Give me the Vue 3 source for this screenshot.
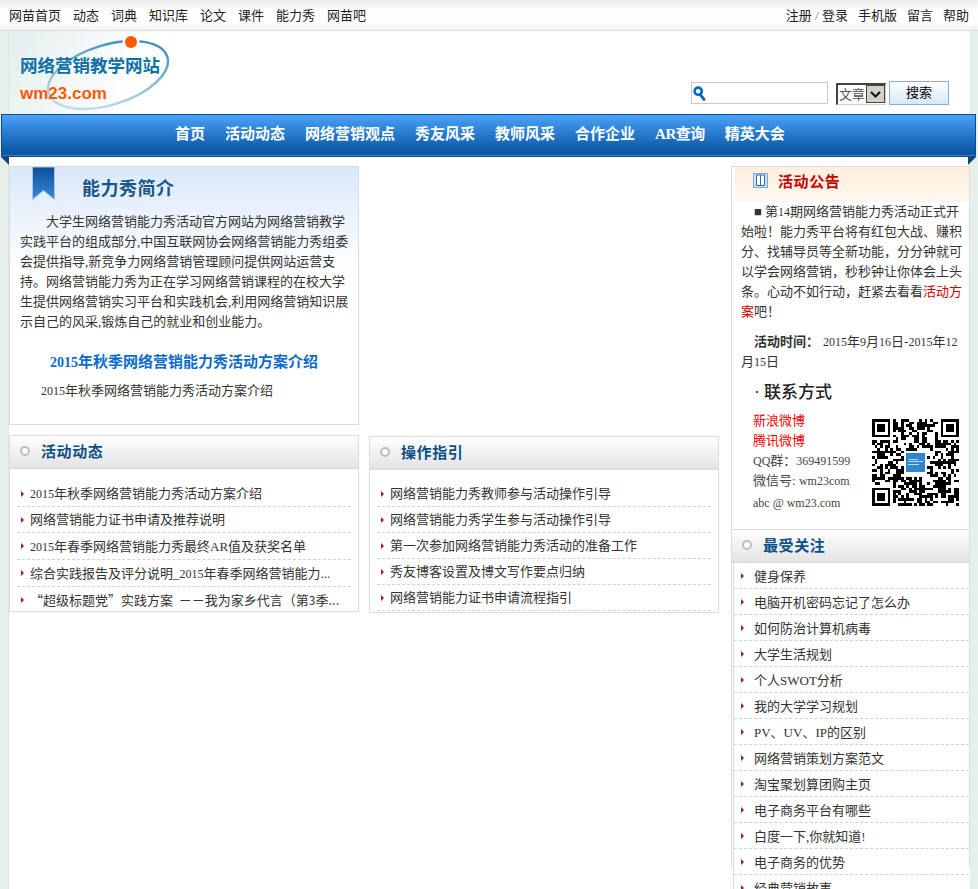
<script setup>
import { computed } from 'vue'

const topLeft = ['网苗首页', '动态', '词典', '知识库', '论文', '课件', '能力秀', '网苗吧']
const topRight = ['手机版', '留言', '帮助']
const navItems = ['首页', '活动动态', '网络营销观点', '秀友风采', '教师风采', '合作企业', 'AR查询', '精英大会']
const newsItems = [
  '2015年秋季网络营销能力秀活动方案介绍',
  '网络营销能力证书申请及推荐说明',
  '2015年春季网络营销能力秀最终AR值及获奖名单',
  '综合实践报告及评分说明_2015年春季网络营销能力...',
  '“超级标题党”实践方案 \u00a0－－我为家乡代言（第3季...'
]
const guideItems = [
  '网络营销能力秀教师参与活动操作引导',
  '网络营销能力秀学生参与活动操作引导',
  '第一次参加网络营销能力秀活动的准备工作',
  '秀友博客设置及博文写作要点归纳',
  '网络营销能力证书申请流程指引'
]
const hotItems = [
  '健身保养', '电脑开机密码忘记了怎么办', '如何防治计算机病毒', '大学生活规划', '个人SWOT分析',
  '我的大学学习规划', 'PV、UV、IP的区别', '网络营销策划方案范文', '淘宝聚划算团购主页',
  '电子商务平台有哪些', '白度一下,你就知道!', '电子商务的优势', '经典营销故事'
]

// Digits in the reference run narrower than the CJK text around them.
const seg = (text) => text.split(/(\d+)/).filter(Boolean).map((t) => ({ t, num: /^\d/.test(t) }))

const N = 33
const qrCells = computed(() => {
  const cells = []
  let seed = 20151
  const rnd = () => {
    seed = (seed * 1103515245 + 12345) & 0x7fffffff
    return (seed >> 16) & 1
  }
  const inFinder = (x, y) => (x < 8 && y < 8) || (x >= N - 8 && y < 8) || (x < 8 && y >= N - 8)
  for (let y = 0; y < N; y++) {
    for (let x = 0; x < N; x++) {
      if (!inFinder(x, y) && rnd()) cells.push({ x, y })
    }
  }
  return cells
})
const finders = [[0, 0], [N - 7, 0], [0, N - 7]]
</script>

<template>
  <div class="page">
    <header class="topbar">
      <nav class="top-links">
        <a v-for="t in topLeft" :key="t">{{ t }}</a>
      </nav>
      <nav class="top-links right">
        <a>注册 <i>/</i> 登录</a>
        <a v-for="t in topRight" :key="t">{{ t }}</a>
      </nav>
    </header>

    <div class="shell">
      <div class="masthead">
        <div class="logo">
          <svg class="logo-art" width="163" height="82" viewBox="0 0 163 82">
            <defs>
              <linearGradient id="ring" x1="0" y1="1" x2="1" y2="0">
                <stop offset="0" stop-color="#dcecf2" />
                <stop offset="0.45" stop-color="#8dbdd4" />
                <stop offset="1" stop-color="#1b7fae" />
              </linearGradient>
            </defs>
            <ellipse cx="99" cy="44" rx="62" ry="30" transform="rotate(-17 99 44)" fill="none" stroke="url(#ring)" stroke-width="2.4" />
            <circle cx="122" cy="11" r="8.5" fill="#fff" />
            <circle cx="122" cy="11" r="6" fill="#f95a05" />
          </svg>
          <div class="logo-title">网络营销教学网站</div>
          <div class="logo-url">wm23.com</div>
        </div>
        <form class="search" @submit.prevent>
          <div class="search-input">
            <svg width="13" height="15" viewBox="0 0 13 15">
              <circle cx="5.2" cy="5.2" r="3.6" fill="none" stroke="#0a63c9" stroke-width="2.6" />
              <path d="M7.2 8.6 L11 13.4" stroke="#0a63c9" stroke-width="3" stroke-linecap="round" />
            </svg>
          </div>
          <div class="fake-select">
            <span>文章</span>
            <b><svg width="13" height="9" viewBox="0 0 13 9"><path d="M2 2 L6.5 6.5 L11 2" fill="none" stroke="#111" stroke-width="2" /></svg></b>
          </div>
          <button class="search-btn" type="button">搜索</button>
        </form>
      </div>

      <nav class="mainnav">
        <a v-for="t in navItems" :key="t">{{ t }}</a>
        <span class="fold left"></span>
        <span class="fold right"></span>
      </nav>

      <div class="content">
        <main class="left-col">
          <section class="intro">
            <svg class="ribbon" width="25" height="34" viewBox="0 0 25 34">
              <defs>
                <linearGradient id="rib" x1="0" y1="0" x2="0" y2="1">
                  <stop offset="0" stop-color="#0e4f9a" />
                  <stop offset="1" stop-color="#3a87d6" />
                </linearGradient>
              </defs>
              <path d="M1.5 0 H23.5 V32.5 L12.5 23.5 L1.5 32.5 Z" fill="url(#rib)" stroke="#a9c6e3" stroke-width="1" />
            </svg>
            <h2 class="intro-title">能力秀简介</h2>
            <p class="intro-text">大学生网络营销能力秀活动官方网站为网络营销教学实践平台的组成部分,中国互联网协会网络营销能力秀组委会提供指导,新竞争力网络营销管理顾问提供网站运营支持。网络营销能力秀为正在学习网络营销课程的在校大学生提供网络营销实习平台和实践机会,利用网络营销知识展示自己的风采,锻炼自己的就业和创业能力。</p>
            <h3 class="intro-sub"><span class="num-b">2015</span>年秋季网络营销能力秀活动方案介绍</h3>
            <p class="intro-link"><span class="num">2015</span>年秋季网络营销能力秀活动方案介绍</p>
          </section>

          <div class="panels">
            <section class="panel">
              <h3 class="bar"><i class="dot"></i>活动动态</h3>
              <ul class="list news">
                <li v-for="t in newsItems" :key="t"><span v-for="(s, i) in seg(t)" :key="i" :class="{ num: s.num }">{{ s.t }}</span></li>
              </ul>
            </section>
            <section class="panel guide">
              <h3 class="bar"><i class="dot"></i>操作指引</h3>
              <ul class="list guide-list">
                <li v-for="t in guideItems" :key="t">{{ t }}</li>
              </ul>
            </section>
          </div>
        </main>

        <aside class="right-col">
          <div class="notice-head">
            <svg width="15" height="15" viewBox="0 0 15 15">
              <rect x="0.5" y="0.5" width="14" height="14" fill="#cfe3f7" stroke="#7fa9d8" />
              <path d="M3.5 2 H7.5 V12.5 H3.5 Z M7.5 2 H11.5 V12.5 H7.5 Z" fill="#fff" stroke="#2e69b3" />
            </svg>
            <span>活动公告</span>
          </div>
          <div class="notice-body">
            <p>■ 第<span class="num">14</span>期网络营销能力秀活动正式开始啦！能力秀平台将有红包大战、赚积分、找辅导员等全新功能，分分钟就可以学会网络营销，秒秒钟让你体会上头条。心动不如行动，赶紧去看看<a class="red">活动方案</a>吧！</p>
            <p class="time"><b>活动时间：</b><span class="num">2015</span>年<span class="num">9</span>月<span class="num">16</span>日-<span class="num">2015</span>年<span class="num">12</span>月<span class="num">15</span>日</p>
            <h4 class="contact-title">· 联系方式</h4>
            <div class="contact">
              <ul>
                <li class="hot">新浪微博</li>
                <li class="hot">腾讯微博</li>
                <li><span class="num">QQ</span>群：<span class="num">369491599</span></li>
                <li>微信号: <span class="num">wm23com</span></li>
                <li class="mail"><span class="num">abc @ wm23.com</span></li>
              </ul>
              <div class="qr">
                <svg width="87" height="87" :viewBox="`0 0 ${N} ${N}`" shape-rendering="crispEdges">
                  <rect v-for="(c, i) in qrCells" :key="i" :x="c.x" :y="c.y" width="1" height="1" fill="#000" />
                  <g v-for="(f, i) in finders" :key="'f' + i">
                    <rect :x="f[0]" :y="f[1]" width="7" height="7" fill="#000" />
                    <rect :x="f[0] + 1" :y="f[1] + 1" width="5" height="5" fill="#fff" />
                    <rect :x="f[0] + 2" :y="f[1] + 2" width="3" height="3" fill="#000" />
                  </g>
                  <rect x="12.2" y="12.2" width="8.6" height="8.6" fill="#fff" />
                  <rect x="12.8" y="12.8" width="7.4" height="7.4" fill="#2f86cf" />
                  <rect x="13.6" y="16" width="5.8" height="0.4" fill="#b9dcf5" />
                  <rect x="14" y="15.2" width="3.6" height="0.4" fill="#b9dcf5" />
                  <rect x="13.6" y="17" width="4.4" height="0.4" fill="#b9dcf5" />
                </svg>
              </div>
            </div>
          </div>
          <h3 class="bar side"><i class="dot"></i>最受关注</h3>
          <ul class="list hot-list">
            <li v-for="t in hotItems" :key="t">{{ t }}</li>
          </ul>
        </aside>
      </div>
    </div>
  </div>
</template>

<style>
html, body { margin: 0; height: 889px; overflow: hidden; background: #e6efec; }
</style>

<style scoped>
.page {
  height: 889px;
  overflow: hidden;
  font: 13px/20px "Liberation Serif", "Noto Sans CJK SC", serif;
  color: #333;
}
ul { list-style: none; margin: 0; padding: 0; }
h2, h3, h4, p { margin: 0; }
.num { font-size: 12px; }
.num-b { font-size: 14px; }

.topbar {
  height: 30px;
  padding: 0 9px;
  display: flex;
  justify-content: space-between;
  align-items: center;
  background: linear-gradient(#ececec, #fff 35%, #fff 70%, #f3f3f3);
  border-bottom: 1px solid #dcdcdc;
  color: #222;
}
.top-links { display: flex; gap: 12px; padding-top: 1px; }
.top-links.right { gap: 10px; }
.top-links i { font-style: normal; color: #777; }

.shell {
  margin: 0 8px;
  height: 858px;
  background: #fff;
  border-left: 1px solid #dfe6e4;
}
.masthead { height: 83px; display: flex; justify-content: space-between; }
.logo {
  position: relative;
  width: 163px;
  height: 83px;
  box-sizing: border-box;
  padding: 22px 0 0 11px;
  background: linear-gradient(115deg, #e3eeee, #fff 75%);
}
.logo-art { position: absolute; left: 0; top: 0; }
.logo-title {
  position: relative;
  font: bold 17.5px/24px "Noto Sans CJK SC", sans-serif;
  color: #0d70a6;
  white-space: nowrap;
}
.logo-url {
  position: relative;
  margin-top: 7px;
  font: bold 17px/20px "Liberation Sans", sans-serif;
  color: #f95a05;
}

.search { display: flex; align-items: flex-start; padding: 50px 21px 0 0; }
.search-input {
  width: 134px;
  height: 20px;
  margin-top: 1px;
  border: 1px solid #c9c9c9;
  background: #fff;
  display: flex;
  align-items: center;
  padding-left: 1px;
}
.fake-select {
  width: 50px;
  height: 22px;
  margin: 2px 3px 0 8px;
  box-sizing: border-box;
  border-style: solid;
  border-color: #444 #d4d0c8 #d4d0c8 #444;
  border-width: 2px 1px 1px 2px;
  display: flex;
  justify-content: space-between;
  background: #fff;
  color: #555;
  line-height: 19px;
  padding-left: 1px;
}
.fake-select b {
  width: 19px;
  background: #d4d0c8;
  border: 1px solid #444;
  display: flex;
  align-items: center;
  justify-content: center;
  box-sizing: border-box;
  height: 18px;
}
.search-btn {
  width: 60px;
  height: 24px;
  padding: 0 0 2px;
  border: 1px solid #8fadcf;
  background: linear-gradient(#fff, #d5e8fb);
  font: 13px/20px "Noto Sans CJK SC", sans-serif;
  color: #000;
}

.mainnav {
  position: relative;
  margin: 0 -6px 0 -8px;
  height: 41px;
  padding: 0 0 0 173px;
  display: flex;
  gap: 20px;
  align-items: flex-start;
  line-height: 39px;
  border: 1px solid #0d4a8c;
  background: linear-gradient(#4ba2f8, #2f84d8 35%, #0c5aa8 85%, #0a559f);
  color: #fff;
  font-weight: bold;
  font-size: 15px;
  box-shadow: inset 0 -1px 0 #3f7dba;
}
.mainnav a:nth-child(7) { letter-spacing: -.5px; }
.fold { position: absolute; bottom: -9px; width: 0; height: 0; border-top: 8px solid #12457f; }
.fold.left { left: -1px; border-left: 8px solid transparent; }
.fold.right { right: -1px; border-right: 8px solid transparent; }

.content { display: flex; justify-content: space-between; padding-top: 9px; }
.left-col { width: 710px; }
.intro {
  position: relative;
  height: 257px;
  width: 348px;
  border: 1px solid #dcdcdc;
  background: linear-gradient(#d9e8fa, #fff 104px);
}
.ribbon { position: absolute; left: 21px; top: 0; }
.intro-title {
  padding: 9px 0 0 72px;
  font: bold 18px/22px "Noto Sans CJK SC", sans-serif;
  letter-spacing: .5px;
  color: #1a5688;
}
.intro-text { margin: 14px 8px 0 10px; text-indent: 26px; }
.intro-sub {
  margin: 20px 0 0 40px;
  font-size: 15px;
  line-height: 20px;
  color: #0b6bc8;
  white-space: nowrap;
}
.intro-link { margin: 8px 0 0 31px; }

.panels { display: flex; gap: 10px; margin-top: 10px; align-items: flex-start; }
.panel { width: 348px; border: 1px solid #dcdcdc; height: 175px; }
.panel.guide { margin-top: 1px; }
.bar {
  height: 32px;
  padding-bottom: 2px;
  box-sizing: border-box;
  display: flex;
  align-items: center;
  background: linear-gradient(#fff, #e3e3e3);
  box-shadow: 0 1px 0 #d8d8d8;
  font: bold 15px/20px "Noto Sans CJK SC", sans-serif;
  letter-spacing: .6px;
  color: #0d4f86;
}
.dot {
  width: 6px;
  height: 6px;
  margin: 0 11px 0 10px;
  border: 2px solid #bdbdbd;
  border-radius: 50%;
  background: #fff;
  flex: none;
}
.list li {
  position: relative;
  height: 25px;
  line-height: 26px;
  border-bottom: 1px dashed #d2d2d2;
  padding-left: 13px;
  white-space: nowrap;
  overflow: hidden;
}
.list li::before {
  content: "";
  position: absolute;
  left: 4px;
  top: 10px;
  border-left: 3px solid #a8182c;
  border-top: 3px solid transparent;
  border-bottom: 3px solid transparent;
}
.news { margin: 13px 7px 0 7px; }
.guide-list { margin: 12px 7px 0 7px; }
.news li:nth-child(3), .news li:nth-child(4) { height: 26px; line-height: 27px; }
.news li:last-child { border-bottom: 0; font-family: "Noto Sans CJK SC", "Liberation Serif", sans-serif; }

.right-col {
  width: 239px;
  border: 1px solid #dcdcdc;
  border-bottom: 0;
  box-sizing: border-box;
  height: 700px;
}
.notice-head {
  margin-left: 3px;
  height: 35px;
  box-sizing: border-box;
  padding: 0 0 8px 18px;
  display: flex;
  align-items: center;
  gap: 10px;
  background: linear-gradient(#ffefdf, #fff8f0);
  font: bold 15px/20px "Noto Sans CJK SC", sans-serif;
  letter-spacing: .6px;
  color: #cc0000;
}
.notice-body { padding: 0 6px 0 9px; }
.notice-body > p:first-child { text-indent: 13px; }
.time { margin-top: 10px; text-indent: 13px; }
.time b { color: #333; margin-right: 4px; }
.red { color: #cc0000; }
.contact-title {
  margin-top: 10px;
  padding-left: 13px;
  font-size: 17px;
  line-height: 22px;
  font-weight: 500;
  color: #222;
}
.contact { display: flex; justify-content: space-between; padding: 7px 4px 0 12px; height: 118px; }
.contact li { line-height: 20px; color: #444; }
.contact .hot { color: #f00; }
.contact .mail { margin-top: 2px; }
.qr { margin-top: 8px; }
.side { border-top: 1px solid #d8d8d8; height: 33px; }
.hot-list { margin: 1px 0 0 1px; border-left: 1px solid #ddd; }
.hot-list li { padding-left: 20px; line-height: 27px; }
.hot-list li::before { left: 7px; }
</style>
